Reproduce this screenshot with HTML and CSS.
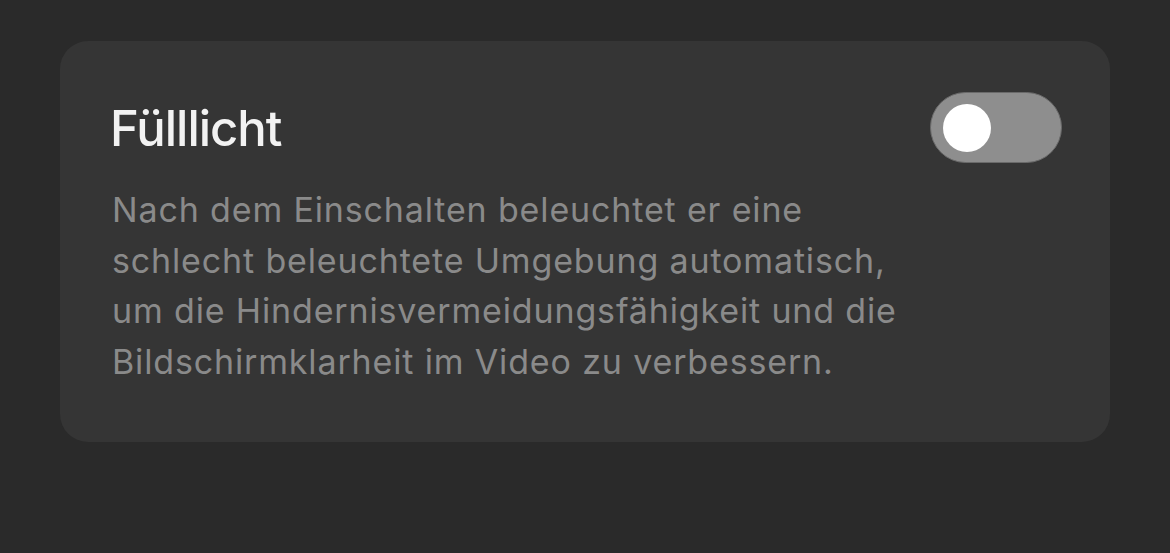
FILE: index.html
```html
<!DOCTYPE html>
<html lang="de">
<head>
  <meta charset="UTF-8">
  <meta name="viewport" content="width=device-width, initial-scale=1.0">
  <title>Fülllicht</title>
  <link rel="stylesheet" href="styles.css">
</head>
<body>

  <div class="card">
    <div class="card-head">
      <h1 class="title">Fülllicht</h1>
      <button class="switch" aria-pressed="false"><span class="knob"></span></button>
    </div>
    <p class="desc">
      Nach dem Einschalten beleuchtet er eine<br>
      schlecht beleuchtete Umgebung automatisch,<br>
      um die Hindernisvermeidungsfähigkeit und die<br>
      Bildschirmklarheit im Video zu verbessern.
    </p>
  </div>

</body>
</html>
```

FILE: styles.css
```css
body {
  margin: 0;
  height: 100vh;
  background-color: #2a2a2a;
  font-family: Inter, "Noto Sans", sans-serif;
}

.card {
  width: 1050px;
  height: 401px;
  box-sizing: border-box;
  margin: 41px 0 0 60px;
  padding: 50px 48px 0 50px;
  background-color: #353535;
  border-radius: 28px;
}

.card-head {
  display: flex;
  justify-content: space-between;
  align-items: flex-start;
}

.title {
  margin: 0;
  font-size: 49px;
  font-weight: 500;
  letter-spacing: -1px;
  line-height: 76px;
  color: #f2f2f2;
}

.switch {
  width: 132px;
  height: 71px;
  margin-top: 1px;
  padding: 0 0 0 12px;
  border: 1px solid #6a6a6a;
  border-radius: 36px;
  background-color: #8e8e8e;
  display: flex;
  align-items: center;
  cursor: pointer;
}

.knob {
  width: 48px;
  height: 48px;
  border-radius: 50%;
  background-color: #fff;
}

.desc {
  margin: 18px 0 0 2px;
  font-size: 34px;
  letter-spacing: 0.85px;
  line-height: 50.5px;
  color: #8a8a8a;
}
```
